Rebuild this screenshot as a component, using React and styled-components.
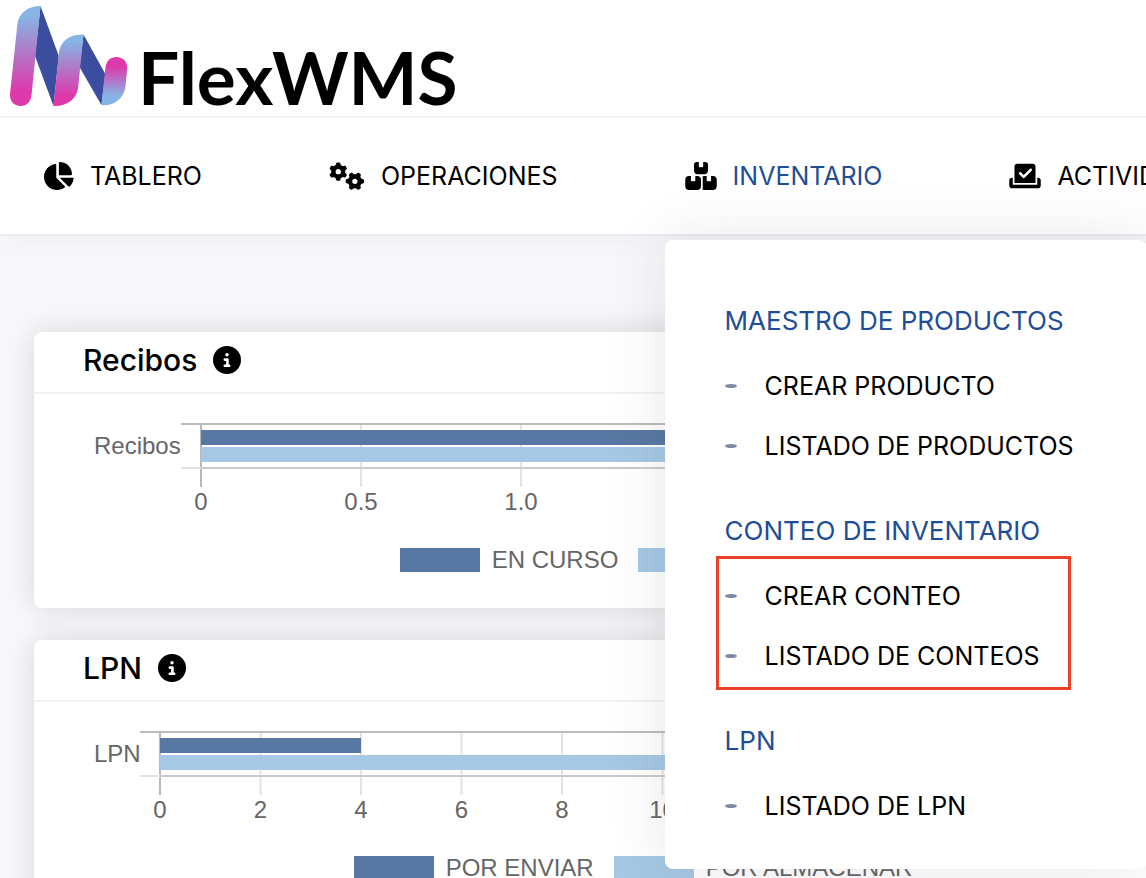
import React from 'react';
import styled, { createGlobalStyle } from 'styled-components';
import {
  FaChartPie,
  FaGears,
  FaBoxesStacked,
  FaCheckToSlot,
  FaCircleInfo,
} from 'react-icons/fa6';

const GlobalStyle = createGlobalStyle`
  * {
    box-sizing: border-box;
  }
  html {
    scrollbar-width: none;
  }
  body {
    margin: 0;
    background: #f8f8fb;
    color: #000;
    font-family: Inter, Roboto, sans-serif;
  }
`;

const Page = styled.div`
  min-height: 100vh;
  overflow-x: clip;
`;

const Header = styled.header`
  display: flex;
  align-items: flex-start;
  height: 118px;
  padding: 0 8px;
  background: #fff;
  border-bottom: 2px solid #f2f2f8;
`;

const Brand = styled.a`
  display: flex;
  align-items: flex-start;
  gap: 6px;
  color: #000;
  text-decoration: none;
`;

const BrandName = styled.span`
  padding-top: 32px;
  font-family: Lato, sans-serif;
  font-size: 73px;
  font-weight: 700;
  line-height: 90px;
`;

const Nav = styled.nav`
  position: relative;
  z-index: 2;
  height: 118px;
  background: #fff;
  border-bottom: 2px solid #ebebf1;
  box-shadow: 0 8px 24px rgba(82, 63, 105, 0.04);
`;

const Menu = styled.ul`
  display: flex;
  gap: 127px;
  height: 100%;
  margin: 0;
  padding: 0 42px;
  list-style: none;
`;

const MenuItem = styled.li`
  position: relative;
  display: flex;
  align-items: center;
  flex-shrink: 0;
`;

const MenuLink = styled.a`
  display: flex;
  align-items: center;
  gap: 16px;
  color: ${({ $active }) => ($active ? '#1f4e96' : '#000')};
  font-size: 25px;
  line-height: 32px;
  text-decoration: none;
  white-space: nowrap;

  svg {
    color: #000;
    width: ${({ $wide }) => ($wide ? '36px' : '32px')};
    height: 28px;
  }
`;

const Dropdown = styled.div`
  position: absolute;
  top: 122px;
  left: -20px;
  width: 482px;
  padding: 46px 60px 33px;
  background: #fff;
  border-radius: 8px;
  box-shadow: 0 0 60px rgba(60, 60, 70, 0.12);
`;

const Group = styled.section`
  & + & {
    margin-top: 20px;
  }
`;

const GroupTitle = styled.h3`
  margin: 0;
  color: #1f4e96;
  font-size: 26px;
  font-weight: 400;
  line-height: 70px;
  white-space: nowrap;
`;

const GroupList = styled.ul`
  position: relative;
  margin: 0;
  padding: 0;
  list-style: none;
`;

const Marker = styled.li`
  position: absolute;
  inset: -10px 16px -4px -9px;
  border: 3px solid #eb4127;
  pointer-events: none;
`;

const SubLink = styled.a`
  display: flex;
  align-items: center;
  gap: 28px;
  height: 60px;
  color: #000;
  font-size: 25px;
  text-decoration: none;
  white-space: nowrap;

  &::before {
    content: '';
    width: 12px;
    height: 4px;
    border-radius: 50%;
    background: #7e88a8;
  }
`;

const Content = styled.main`
  display: flex;
  flex-direction: column;
  gap: 32px;
  min-width: 1266px;
  padding: 96px 34px 34px;
`;

const Card = styled.section`
  background: #fff;
  border-radius: 8px;
  box-shadow: 0 0 30px rgba(0, 0, 0, 0.14);
`;

const CardHeader = styled.div`
  display: flex;
  align-items: center;
  gap: 16px;
  height: 62px;
  padding: 0 49px 4px;
  border-bottom: 2px solid #f2f2f8;

  svg {
    width: 28px;
    height: 28px;
  }
`;

const CardTitle = styled.h2`
  margin: 0;
  font-size: 30px;
  font-weight: 500;
  line-height: 36px;
`;

const Plot = styled.svg`
  display: block;
  width: 100%;
  height: 154px;
  font-family: 'Liberation Sans', Arial, sans-serif;
  font-size: 24px;
  fill: #666;
`;

const Legend = styled.div`
  display: flex;
  justify-content: center;
  gap: 20px;
  padding-bottom: 36px;
`;

const LegendItem = styled.span`
  display: flex;
  align-items: center;
  gap: 12px;
  color: #666;
  font-family: 'Liberation Sans', Arial, sans-serif;
  font-size: 24px;
  line-height: 24px;

  &::before {
    content: '';
    width: 80px;
    height: 24px;
    background: ${({ $color }) => $color};
  }
`;

const DARK = '#5878a3';
const LIGHT = '#a6c8e4';

const menu = [
  { label: 'TABLERO', icon: FaChartPie },
  { label: 'OPERACIONES', icon: FaGears, wide: true },
  { label: 'INVENTARIO', icon: FaBoxesStacked, active: true },
  { label: 'ACTIVIDADES', icon: FaCheckToSlot },
];

const groups = [
  { title: 'MAESTRO DE PRODUCTOS', links: ['CREAR PRODUCTO', 'LISTADO DE PRODUCTOS'] },
  { title: 'CONTEO DE INVENTARIO', links: ['CREAR CONTEO', 'LISTADO DE CONTEOS'], marked: true },
  { title: 'LPN', links: ['LISTADO DE LPN'] },
];

const charts = [
  {
    title: 'Recibos',
    origin: 167,
    step: 160,
    ticks: ['0', '0.5', '1.0', '1.5', '2.0'],
    values: [4, 4],
    legend: ['EN CURSO', 'CERRADOS'],
  },
  {
    title: 'LPN',
    origin: 126,
    step: 100.5,
    ticks: ['0', '2', '4', '6', '8', '10', '12'],
    values: [2, 6],
    legend: ['POR ENVIAR', 'POR ALMACENAR'],
  },
];

function Logo() {
  return (
    <svg width="124" height="110" viewBox="8 0 124 110" aria-hidden="true">
      <defs>
        <linearGradient id="down" x1="0" y1="0" x2="0" y2="1">
          <stop offset="0.1" stopColor="#86b4e4" />
          <stop offset="0.85" stopColor="#de39ab" />
        </linearGradient>
        <linearGradient id="up" x1="0" y1="0" x2="0" y2="1">
          <stop offset="0.2" stopColor="#de39ab" />
          <stop offset="0.8" stopColor="#86b4e4" />
        </linearGradient>
      </defs>
      <path d="M40.5 6L58.8 56L53.5 106L35 56Z" fill="#3b4d9e" />
      <path d="M83.5 34.5L105.3 74L101.5 105.3L79.5 67Z" fill="#3b4d9e" />
      <path
        d="M40.5 6C27 6 18 14 17.3 25L10 94C9.5 101 14 106 20.5 106C27 106 31 101.5 31.5 95Z"
        fill="url(#down)"
      />
      <path
        d="M83.5 34.5C69 33.5 59.5 42 58.8 54L53.5 106C68 106.5 77.5 98 78.3 86Z"
        fill="url(#down)"
      />
      <path
        d="M101.5 105.3L105.5 67C106.5 60.5 110.5 57 116.5 57C123 57 127.5 62 127.2 68L125.7 85C124.5 98 115 106 101.5 105.3Z"
        fill="url(#up)"
      />
    </svg>
  );
}

function BarChart({ title, origin, step, ticks, values }) {
  return (
    <Plot role="img" aria-label={title}>
      {ticks.map((tick, i) => (
        <g key={tick}>
          <rect
            x={origin + i * step - 1}
            y="30"
            width="2"
            height="63"
            fill={i === 0 ? '#b9b9b9' : '#e3e3e3'}
          />
          <text x={origin + i * step} y="116" textAnchor="middle">
            {tick}
          </text>
        </g>
      ))}
      <rect x={origin - 20} y="29" width="1010" height="2" fill="#bcbcbc" />
      <rect x={origin - 20} y="73" width="20" height="2" fill="#e3e3e3" />
      <rect x={origin} y="73" width="990" height="2" fill="#cacaca" />
      <rect x={origin} y="36" width={values[0] * step} height="15" fill={DARK} />
      <rect x={origin} y="53" width={values[1] * step} height="15" fill={LIGHT} />
      <text x="60" y="60">
        {title}
      </text>
    </Plot>
  );
}

function InventoryMenu() {
  return (
    <Dropdown>
      {groups.map((group) => (
        <Group key={group.title}>
          <GroupTitle>{group.title}</GroupTitle>
          <GroupList>
            {group.links.map((link) => (
              <li key={link}>
                <SubLink href="#">{link}</SubLink>
              </li>
            ))}
            {group.marked && <Marker aria-hidden="true" />}
          </GroupList>
        </Group>
      ))}
    </Dropdown>
  );
}

export default function App() {
  return (
    <Page>
      <GlobalStyle />
      <Header>
        <Brand href="#">
          <Logo />
          <BrandName>FlexWMS</BrandName>
        </Brand>
      </Header>
      <Nav>
        <Menu>
          {menu.map(({ label, icon: Icon, active, wide }) => (
            <MenuItem key={label}>
              <MenuLink href="#" $active={active} $wide={wide}>
                <Icon />
                {label}
              </MenuLink>
              {active && <InventoryMenu />}
            </MenuItem>
          ))}
        </Menu>
      </Nav>
      <Content>
        {charts.map((chart) => (
          <Card key={chart.title}>
            <CardHeader>
              <CardTitle>{chart.title}</CardTitle>
              <FaCircleInfo />
            </CardHeader>
            <BarChart {...chart} />
            <Legend>
              <LegendItem $color={DARK}>{chart.legend[0]}</LegendItem>
              <LegendItem $color={LIGHT}>{chart.legend[1]}</LegendItem>
            </Legend>
          </Card>
        ))}
      </Content>
    </Page>
  );
}
